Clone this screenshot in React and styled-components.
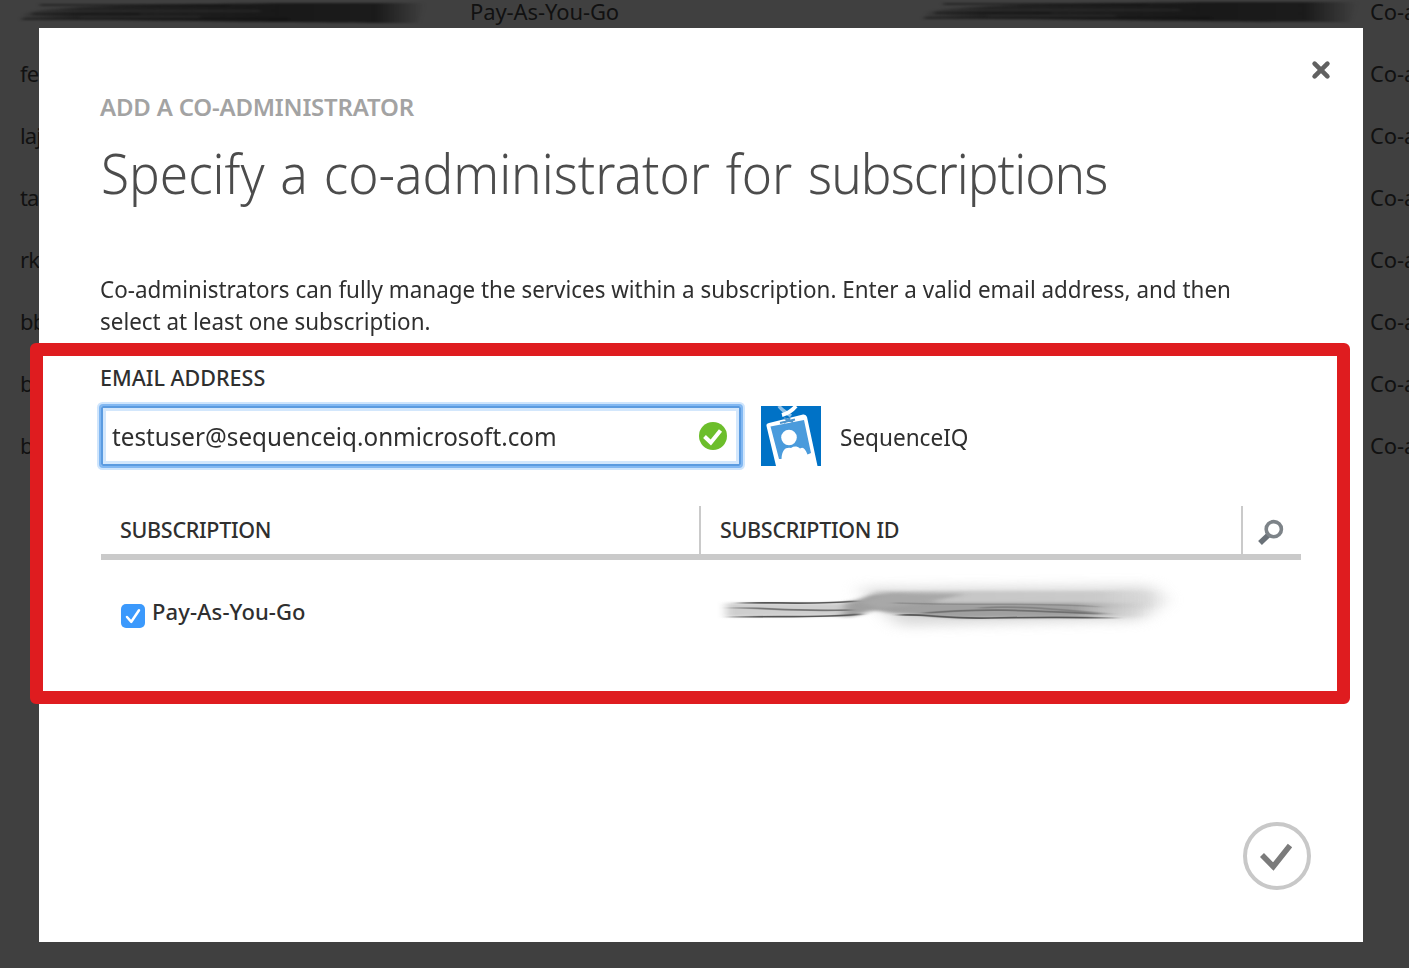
import React from "react";
import styled, { createGlobalStyle } from "styled-components";

const GlobalStyle = createGlobalStyle`
  * { box-sizing: border-box; }
  body {
    margin: 0;
    overflow: hidden;
    background: #404040;
    font-family: "Noto Sans", "Open Sans", sans-serif;
    color: #2f2f2f;
  }
`;

const Page = styled.main`
  position: relative;
  width: 1409px;
  height: 968px;
  overflow: hidden;
`;

const Backdrop = styled.div`
  margin-top: -20px;
  padding-left: 20px;
  color: #111;
`;

const BackRow = styled.div`
  display: grid;
  grid-template-columns: 450px 900px 200px;
  height: 62px;
  line-height: 62px;
  font-size: 22px;
  letter-spacing: -0.1px;
  white-space: nowrap;
`;

const Person = styled.span`
  letter-spacing: -0.9px;
`;

const Condensed = styled.span`
  display: inline-block;
  transform: scaleX(${(p) => p.$ratio});
  transform-origin: 0 50%;
  white-space: nowrap;
`;

const Smudge = styled.svg`
  position: absolute;
  left: ${(p) => p.$x}px;
  top: ${(p) => p.$y}px;
  overflow: visible;
`;

const Dialog = styled.section`
  position: absolute;
  left: 39px;
  top: 28px;
  width: 1324px;
  height: 914px;
  padding: 26px 52px 52px 61px;
  display: flex;
  flex-direction: column;
  background: #fff;
`;

const CloseButton = styled.button`
  align-self: flex-end;
  display: flex;
  width: 32px;
  height: 32px;
  margin-right: -26px;
  padding: 0;
  border: 0;
  background: none;
  align-items: center;
  justify-content: center;
`;

const Caption = styled.div`
  margin-top: 5px;
  height: 32px;
  line-height: 32px;
  font-size: 24px;
  font-weight: 600;
  letter-spacing: -0.2px;
  color: #a3a3a3;
`;

const Title = styled.h1`
  margin: 9px 0 0 1px;
  height: 80px;
  line-height: 80px;
  font-size: 56px;
  font-weight: 300;
  word-spacing: 2.7px;
  color: #4c4c4c;
`;

const TightWord = styled.span`
  letter-spacing: -1px;
`;

const Intro = styled.p`
  margin: 61px 0 0;
  height: 64px;
  line-height: 32px;
  font-size: 24px;
`;

const Label = styled.label`
  margin-top: 25px;
  height: 32px;
  line-height: 32px;
  font-size: 21.5px;
  font-weight: 500;
`;

const EmailRow = styled.div`
  display: flex;
  align-items: center;
  height: 60px;
  margin: 12px 0 0 1px;
`;

const EmailField = styled.div`
  display: flex;
  align-items: center;
  justify-content: space-between;
  width: 640px;
  height: 60px;
  padding: 0 12px 0 9px;
  border: 2px solid #5b9be0;
  border-radius: 2px;
  box-shadow: 0 0 0 2px #82b8f2, 0 0 0 4px #cfe5fc, inset 0 0 0 3px #d3e7fc;
  font-size: 25.5px;
`;

const Badge = styled.svg`
  margin-left: 20px;
`;

const Directory = styled.span`
  margin-left: 19px;
  padding-top: 1px;
  font-size: 24px;
`;

const TableHead = styled.div`
  display: grid;
  grid-template-columns: 598px 542px 60px;
  width: 1200px;
  height: 54px;
  margin: 40px 0 0 1px;
  border-bottom: 6px solid #cacaca;
`;

const HeadCell = styled.div`
  padding-left: 19px;
  line-height: 47px;
  font-size: 21.5px;
  font-weight: 500;
  letter-spacing: -0.3px;
  border-left: ${(p) => (p.$divided ? "2px solid #cacaca" : "0")};
`;

const SearchCell = styled.div`
  display: flex;
  align-items: center;
  padding: 3px 0 0 15px;
  border-left: 2px solid #cacaca;
`;

const SubscriptionRow = styled.div`
  display: flex;
  align-items: center;
  height: 48px;
  margin: 28px 0 0 21px;
`;

const Checkbox = styled.span`
  display: flex;
  width: 24px;
  height: 24px;
  margin-top: 8px;
  border-radius: 5px;
  background: #3b99fc;
`;

const PlanName = styled.span`
  margin-left: 7px;
  padding-bottom: 2px;
  font-size: 22px;
  font-weight: 500;
  letter-spacing: 0.1px;
`;

const ConfirmButton = styled.button`
  align-self: flex-end;
  display: flex;
  margin-top: auto;
  padding: 0;
  border: 0;
  background: none;
`;

const Highlight = styled.div`
  position: absolute;
  left: 30px;
  top: 343px;
  width: 1320px;
  height: 361px;
  border: 13px solid #df1c1f;
  border-radius: 6px;
  pointer-events: none;
`;

const people = ["", "fe", "laj", "ta", "rk", "bb", "b", "b"];

function DarkSmudge({ x, y, w }) {
  return (
    <Smudge $x={x} $y={y} width={w} height="28" viewBox="0 0 400 28" preserveAspectRatio="none">
      <defs>
        <linearGradient id={`fade${x}`} gradientUnits="userSpaceOnUse" x1="0" x2="405" y1="0" y2="0">
          <stop offset="0" stopColor="#171717" stopOpacity="0.1" />
          <stop offset="0.14" stopColor="#171717" stopOpacity="0.7" />
          <stop offset="0.6" stopColor="#171717" stopOpacity="0.95" />
          <stop offset="0.88" stopColor="#171717" stopOpacity="0.9" />
          <stop offset="1" stopColor="#171717" stopOpacity="0" />
        </linearGradient>
        <filter id={`soft${x}`} x="-5%" y="-20%" width="115%" height="140%" colorInterpolationFilters="sRGB">
          <feGaussianBlur stdDeviation="2 0.8" />
        </filter>
      </defs>
      <g filter={`url(#soft${x})`}>
        <path d="M4 13 C20 5 120 4 260 2 H405 L398 22 C300 22 100 19 4 18Z" fill={`url(#fade${x})`} />
        <path d="M2 18 H270 M20 4 H210 M12 13 H120" stroke="#111" strokeWidth="1.5" fill="none" opacity="0.75" />
        <path d="M30 10 H240 M60 16 H180" stroke="#333" strokeWidth="1" fill="none" />
      </g>
    </Smudge>
  );
}

function LightSmudge() {
  return (
    <Smudge $x={700} $y={560} width="500" height="90" viewBox="0 0 500 90">
      <defs>
        <linearGradient id="bandFade" gradientUnits="userSpaceOnUse" x1="150" x2="450" y1="0" y2="0">
          <stop offset="0" stopColor="#a0a0a0" />
          <stop offset="0.75" stopColor="#a0a0a0" />
          <stop offset="1" stopColor="#c4c4c4" stopOpacity="0" />
        </linearGradient>
        <linearGradient id="topFade" gradientUnits="userSpaceOnUse" x1="160" x2="460" y1="0" y2="0">
          <stop offset="0" stopColor="#c0c0c0" />
          <stop offset="0.8" stopColor="#c8c8c8" />
          <stop offset="1" stopColor="#d0d0d0" stopOpacity="0" />
        </linearGradient>
        <linearGradient id="lineFade" gradientUnits="userSpaceOnUse" x1="20" x2="425" y1="0" y2="0">
          <stop offset="0" stopColor="#555" stopOpacity="0" />
          <stop offset="0.1" stopColor="#555" />
          <stop offset="0.9" stopColor="#555" />
          <stop offset="1" stopColor="#555" stopOpacity="0" />
        </linearGradient>
        <filter id="haze" x="-10%" y="-60%" width="120%" height="220%" colorInterpolationFilters="sRGB">
          <feGaussianBlur stdDeviation="10 6" />
        </filter>
        <filter id="soft" x="-10%" y="-30%" width="120%" height="160%" colorInterpolationFilters="sRGB">
          <feGaussianBlur stdDeviation="5 1.5" />
        </filter>
        <filter id="fine" x="-5%" y="-20%" width="110%" height="140%" colorInterpolationFilters="sRGB">
          <feGaussianBlur stdDeviation="4 0.6" />
        </filter>
      </defs>
      <path d="M158 28 L450 26 L465 40 L440 60 L200 66Z" fill="#d0d0d0" opacity="0.8" filter="url(#haze)" />
      <path d="M175 31 H460 V48 H160Z" fill="url(#topFade)" opacity="0.85" filter="url(#soft)" />
      <path d="M26 43 H140 L160 40 L150 56 L26 57Z" fill="#c2c2c2" filter="url(#soft)" opacity="0.8" />
      <path d="M145 44 L172 35 H200 L240 43 H450 V57 L260 58 L190 53 L175 50 L155 56 L142 57Z" fill="url(#bandFade)" filter="url(#soft)" />
      <path d="M160 42 L190 33 L265 34 L225 43 L180 49Z" fill="#a8a8a8" filter="url(#soft)" />
      <g fill="none" stroke="url(#lineFade)" strokeWidth="1.7" filter="url(#fine)">
        <path d="M38 43 C70 42 120 45 155 41" />
        <path d="M28 48 C60 47 90 52 150 50" opacity="0.75" />
        <path d="M28 57 C80 56 130 58 160 54" />
        <path d="M200 55 C235 54 240 59 290 58 S370 57 418 58" />
        <path d="M195 43 C280 46 340 42 400 47" opacity="0.3" />
        <path d="M225 53 C280 48 320 50 400 54" opacity="0.65" />
        <path d="M280 48 C320 45 360 50 410 54" opacity="0.4" />
      </g>
    </Smudge>
  );
}

export default function App() {
  return (
    <Page>
      <GlobalStyle />
      <Backdrop>
        {people.map((name, i) => (
          <BackRow key={i}>
            <Person>{name}</Person>
            <span>{i === 0 ? "Pay-As-You-Go" : ""}</span>
            <span>Co-administrator</span>
          </BackRow>
        ))}
      </Backdrop>
      <DarkSmudge x={20} y={1} w={400} />
      <DarkSmudge x={922} y={0} w={430} />

      <Dialog>
        <CloseButton aria-label="Close">
          <svg width="20" height="20" viewBox="0 0 20 20">
            <path d="M3.6 3.6 16.4 16.4 M16.4 3.6 3.6 16.4" stroke="#616161" strokeWidth="4.6" strokeLinecap="round" />
          </svg>
        </CloseButton>
        <Caption>ADD A CO-ADMINISTRATOR</Caption>
        <Title>
          <Condensed $ratio={0.917}>
            Specify a co-administrator for <TightWord>subscriptions</TightWord>
          </Condensed>
        </Title>
        <Intro>
          <Condensed $ratio={0.934}>
            Co-administrators can fully manage the services within a subscription. Enter a valid email address, and then
            <br />
            select at least one subscription.
          </Condensed>
        </Intro>
        <Label>EMAIL ADDRESS</Label>
        <EmailRow>
          <EmailField>
            <Condensed $ratio={0.95}>testuser@sequenceiq.onmicrosoft.com</Condensed>
            <svg width="28" height="28" viewBox="0 0 28 28">
              <circle cx="14" cy="14" r="14" fill="#6cbe2b" />
              <path d="M5.5 14.5 11.8 20.5 21.5 8.5" fill="none" stroke="#fff" strokeWidth="4" />
            </svg>
          </EmailField>
          <Badge width="60" height="60" viewBox="0 0 60 60">
            <rect width="60" height="60" fill="#0072c6" />
            <path d="M5.5 20 Q5 17.5 8 17 L42 8.5 Q45 8 46 11 L56.5 60 H15Z" fill="#fff" />
            <path d="M9.5 20.5 L43 14 L50 47 L46.5 48.5 C44 42 42 40.5 39 42.5 C36 40 33 40 30 42 C25 41 21 43 20.5 53 L18 53Z" fill="#4a9bdc" />
            <circle cx="28" cy="31.500" r="7.8" fill="#fff" />
            <path d="M18 0 C20 4 25 6 30 10" stroke="#8fc0e6" strokeWidth="3.5" fill="none" />
            <path d="M35 0 C30 6 25 8 21 9" stroke="#fff" strokeWidth="4" fill="none" />
            <path d="M19 17 L34 13.5 M23 12 L32 16 M29 12 L23 17" stroke="#4d94cc" strokeWidth="2.2" fill="none" />
          </Badge>
          <Directory>
            <Condensed $ratio={0.94}>SequenceIQ</Condensed>
          </Directory>
        </EmailRow>
        <TableHead>
          <HeadCell>SUBSCRIPTION</HeadCell>
          <HeadCell $divided>SUBSCRIPTION ID</HeadCell>
          <SearchCell>
            <svg width="26" height="26" viewBox="0 0 26 26">
              <path d="M11.5 15 2 24" stroke="#6a7178" strokeWidth="5.4" />
              <circle cx="15.800" cy="10.200" r="7.6" fill="#fff" stroke="#7d8388" strokeWidth="3.6" />
            </svg>
          </SearchCell>
        </TableHead>
        <SubscriptionRow>
          <Checkbox role="checkbox" aria-checked="true">
            <svg width="24" height="24" viewBox="0 0 24 24">
              <path d="M6 13 10.3 17.8 18 6.3" fill="none" stroke="#fff" strokeWidth="2.5" strokeLinecap="round" strokeLinejoin="round" />
            </svg>
          </Checkbox>
          <PlanName>Pay-As-You-Go</PlanName>
        </SubscriptionRow>
        <ConfirmButton aria-label="Confirm">
          <svg width="68" height="68" viewBox="0 0 68 68">
            <circle cx="34" cy="34" r="32" fill="none" stroke="#c8c8c8" strokeWidth="4" />
            <path d="M19 33 30.3 44.5 47 23.5" fill="none" stroke="#7b7b7b" strokeWidth="5.6" />
          </svg>
        </ConfirmButton>
      </Dialog>
      <LightSmudge />
      <Highlight />
    </Page>
  );
}
